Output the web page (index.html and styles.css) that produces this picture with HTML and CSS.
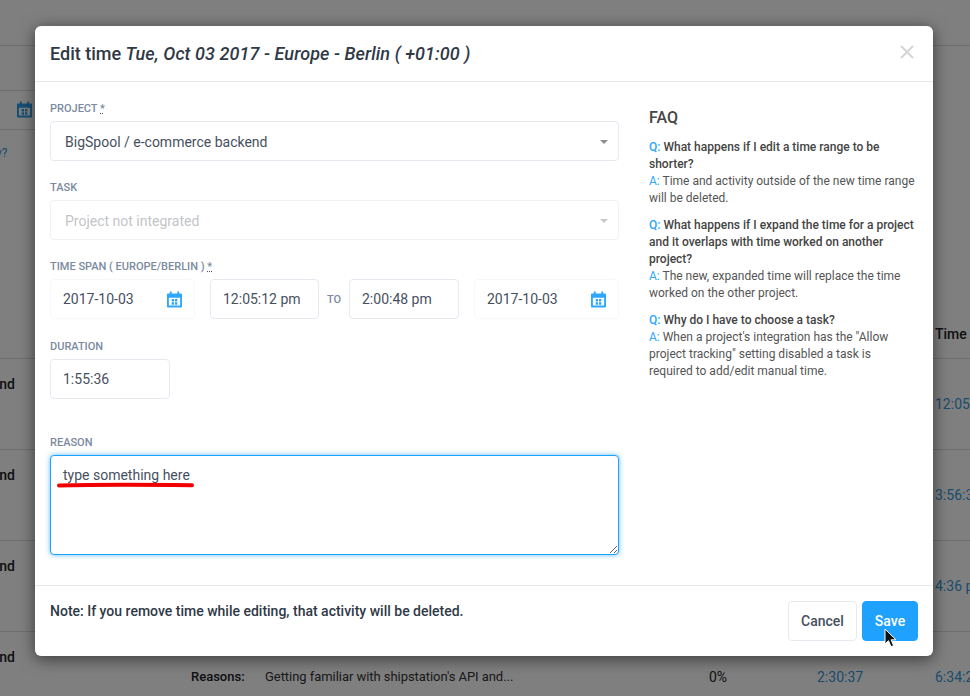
FILE: index.html
```html
<!DOCTYPE html>
<html lang="en">
<head>
<meta charset="utf-8">
<title>Edit time</title>
<link rel="stylesheet" href="styles.css">
</head>
<body>
<svg class="sprite" width="0" height="0" aria-hidden="true">
  <symbol id="cal" viewBox="0 0 16 17">
    <path fill="currentColor" fill-rule="evenodd" d="M3 0h2v2h6V0h2v2h2a1 1 0 0 1 1 1v13a1 1 0 0 1-1 1H1a1 1 0 0 1-1-1V3a1 1 0 0 1 1-1h2V0zM2 6.500v8.500h12V6.500H2zM5 8h2.500v2.500H5V8zm3.500 0H11v2.500H8.500V8zM5 11.500h2.500V14H5v-2.500zm3.500 0H11V14H8.500v-2.500z"/>
  </symbol>
</svg>

<div class="page">
  <div class="top-bar"></div>
  <div class="sub-bar"></div>
  <div class="date-bar"><svg class="bg-cal"><use href="#cal"/></svg></div>
  <div class="hint-row"><a class="bg-link">y?</a><span class="head-time">Time</span></div>
  <div class="t-row"><span class="col-name">BigSpool / e-commerce backend</span><span class="col-time link">12:05:12 pm</span></div>
  <div class="t-row"><span class="col-name">BigSpool / e-commerce backend</span><span class="col-time link">3:56:30 pm</span></div>
  <div class="t-row"><span class="col-name">BigSpool / e-commerce backend</span><span class="col-time link">4:36 pm</span></div>
  <div class="t-row last-row">
    <span class="col-name">BigSpool / e-commerce backend</span>
    <div class="reasons"><b>Reasons:</b><span class="reason-text">Getting familiar with shipstation's API and...</span></div>
    <span class="pct">0%</span>
    <span class="dur link">2:30:37</span>
    <span class="col-time link">6:34:20 pm</span>
  </div>
</div>

<div class="backdrop"></div>

<div class="modal">
  <header class="modal-head">
    <h1 class="modal-title">Edit time <em>Tue, Oct 03 2017 - Europe - Berlin ( +01:00 )</em></h1>
    <svg class="close" width="14" height="14" viewBox="0 0 14 14"><path d="M1 1l12 12M13 1L1 13" stroke="#d3d3d3" stroke-width="1.800" fill="none"/></svg>
  </header>

  <div class="modal-body">
    <form class="form">
      <div class="group">
        <label class="label">Project <span class="req">*</span></label>
        <div class="field select"><span>BigSpool / e-commerce backend</span><i class="caret"></i></div>
      </div>
      <div class="group">
        <label class="label">Task</label>
        <div class="field select disabled"><span>Project not integrated</span><i class="caret"></i></div>
      </div>
      <div class="group group-time">
        <label class="label">Time span ( Europe/Berlin ) <span class="req">*</span></label>
        <div class="time-row">
          <div class="field date"><span>2017-10-03</span><svg class="cal-icon"><use href="#cal"/></svg></div>
          <div class="field time first-time">12:05:12 pm</div>
          <span class="to">To</span>
          <div class="field time second-time">2:00:48 pm</div>
          <div class="field date end-date"><span>2017-10-03</span><svg class="cal-icon"><use href="#cal"/></svg></div>
        </div>
      </div>
      <div class="group group-duration">
        <label class="label">Duration</label>
        <div class="field duration">1:55:36</div>
      </div>
      <div class="group group-reason">
        <label class="label">Reason</label>
        <div class="reason-wrap">
          <textarea class="reason">type something here</textarea>
          <svg class="scribble" width="140" height="8" viewBox="0 0 140 8"><path d="M3 4.500C40 3.500 100 3.800 136 4.200" stroke="#f00000" stroke-width="4" stroke-linecap="round" fill="none"/></svg>
        </div>
      </div>
    </form>

    <aside class="faq">
      <h2 class="faq-title">FAQ</h2>
      <p class="faq-item"><b><span class="qa">Q:</span> What happens if I edit a time range to be shorter?</b><br><span class="qa">A:</span> Time and activity outside of the new time range will be deleted.</p>
      <p class="faq-item"><b><span class="qa">Q:</span> What happens if I expand the time for a project and it overlaps with time worked on another project?</b><br><span class="qa">A:</span> The new, expanded time will replace the time worked on the other project.</p>
      <p class="faq-item"><b><span class="qa">Q:</span> Why do I have to choose a task?</b><br><span class="qa">A:</span> When a project's integration has the "Allow project tracking" setting disabled a task is required to add/edit manual time.</p>
    </aside>
  </div>

  <footer class="modal-foot">
    <p class="note">Note: If you remove time while editing, that activity will be deleted.</p>
    <div class="actions">
      <button class="btn btn-cancel" type="button">Cancel</button>
      <button class="btn btn-save" type="button">Save</button>
    </div>
  </footer>
</div>

<svg class="cursor" width="13" height="20" viewBox="0 0 13 20"><path d="M1 1v15l3.500-3.300 2.500 6 2.600-1.100-2.500-5.800h4.900z" fill="#111" stroke="#fff" stroke-width="1"/></svg>
</body>
</html>
```

FILE: styles.css
```css
* { box-sizing: border-box; }
html, body { margin: 0; height: 696px; overflow: hidden; }
body { font-family: Roboto, "Liberation Sans", sans-serif; font-size: 14px; color: #47505e; background: #fff; }
.sprite { position: absolute; }

/* Page behind the dialog */
.page { display: flex; flex-direction: column; height: 696px; overflow: hidden; color: #222; }
.page > div { flex: none; }
.top-bar { height: 46px; border-bottom: 1px solid #ddd; }
.sub-bar { height: 45px; width: 300px; border-bottom: 1px solid #ddd; }
.date-bar { height: 39px; width: 300px; border-bottom: 1px solid #ddd; padding: 10px 0 0 17px; }
.bg-cal { display: block; width: 15px; height: 17px; color: #2b9fe8; }
.hint-row { height: 229px; padding-top: 16px; display: flex; justify-content: space-between; border-bottom: 1px solid #ddd; }
.bg-link { color: #3498db; font-size: 12px; line-height: 14px; margin-left: -4px; }
.head-time { width: 35px; align-self: flex-end; padding-bottom: 16px; font-weight: 500; overflow: hidden; line-height: 16px; }
.t-row { height: 91px; display: flex; align-items: flex-start; border-bottom: 1px solid #ddd; }
.col-name { width: 15px; padding-top: 17px; font-weight: 500; white-space: nowrap; overflow: hidden; display: flex; justify-content: flex-end; flex: none; line-height: 16px; }
.col-time { margin-left: auto; width: 35px; padding-top: 37px; white-space: nowrap; overflow: hidden; flex: none; line-height: 16px; }
.link { color: #3498db; }
.last-row { border-bottom: 0; }
.reasons { display: flex; margin-left: 176px; padding-top: 37px; width: 518px; line-height: 16px; white-space: nowrap; flex: none; }
.reasons b { width: 74px; font-weight: 500; font-size: 13px; }
.reason-text { color: #333; font-size: 13px; letter-spacing: -.05px; }
.pct { padding-top: 37px; width: 108px; flex: none; line-height: 16px; }
.dur { padding-top: 37px; line-height: 16px; }

.backdrop { position: absolute; inset: 0; background: rgba(0, 0, 0, .5); }

/* Dialog */
.modal { position: absolute; left: 35px; top: 26px; width: 898px; height: 630px; display: flex; flex-direction: column; background: #fff; border-radius: 6px; box-shadow: 0 3px 16px rgba(0, 0, 0, .55); }
.modal-head { height: 56px; flex: none; display: flex; align-items: center; justify-content: space-between; padding: 0 19px 1px 15px; border-bottom: 1px solid #e7e9ec; }
.modal-title { margin: 0; font-size: 18px; font-weight: 500; color: #2f3946; }
.modal-title em { font-style: italic; letter-spacing: .08px; }
.close { display: block; margin-bottom: 3px; }

.modal-body { flex: 1; display: flex; gap: 30px; padding: 20px 15px 0; }
.form { width: 569px; flex: none; }
.group { margin-bottom: 20px; }
.group-time { margin-bottom: 21px; }
.group-duration { margin-bottom: 37px; }
.group-reason { margin-bottom: 0; }
.label { display: block; height: 13px; margin-bottom: 6px; font-size: 11px; font-weight: 500; line-height: 13px; text-transform: uppercase; color: #7b8aa0; }
.req { text-decoration: underline dotted #555; }
.field { height: 40px; display: flex; align-items: center; background: #fff; border: 1px solid #e6eaf0; border-radius: 4px; padding: 0 12px; font-size: 14px; color: #47505e; }
.select { padding: 1px 10px 0 14px; justify-content: space-between; }
.select.disabled { color: #c3c5c9; border-color: #eff1f5; }
.caret { width: 0; height: 0; border-left: 4.500px solid transparent; border-right: 4.500px solid transparent; border-top: 4.500px solid #8d8d8d; }
.select.disabled .caret { border-top-color: #c8c8c8; }
.time-row { display: flex; align-items: center; }
.date { width: 145px; justify-content: space-between; border-color: #f7f8fa; }
.cal-icon { display: block; width: 15px; height: 17px; color: #2ea7ff; }
.first-time { margin-left: 15px; }
.time { width: 109px; }
.second-time { width: 110px; }
.to { width: 30px; text-align: center; font-size: 11px; font-weight: 500; line-height: 13px; text-transform: uppercase; color: #7b8aa0; }
.end-date { margin-left: 15px; }
.duration { width: 120px; }
.reason-wrap { position: relative; }
.reason { display: block; width: 569px; height: 100px; padding: 10px 12px; border: 1px solid #1ea1ff; border-radius: 4px; outline: 0; box-shadow: 0 0 5px rgba(30, 161, 255, .7); font: 14px/18px Roboto, "Liberation Sans", sans-serif; color: #47505e; background: #fff; }
.scribble { position: absolute; left: 6px; top: 26px; display: block; }

.faq { width: 267px; flex: none; font-size: 12px; line-height: 17px; color: #555; }
.faq-title { margin: 6px 0 11px; font-size: 16px; line-height: 20px; font-weight: 500; color: #454545; }
.faq-item { margin: 0 0 10px; }
.faq-item b { font-weight: 500; color: #444; }
.qa { color: #2ea7ff; }

.modal-foot { height: 71px; flex: none; display: flex; align-items: flex-start; justify-content: space-between; padding: 15px; border-top: 1px solid #e7e9ec; }
.note { margin: 1px 0 0; font-weight: 500; font-size: 14px; line-height: 18px; color: #2f3946; }
.actions { display: flex; gap: 5px; }
.btn { height: 40px; border-radius: 4px; font: 500 14px Roboto, "Liberation Sans", sans-serif; padding: 0; cursor: pointer; }
.btn-cancel { width: 69px; background: #fff; border: 1px solid #e6eaf0; color: #47505e; }
.btn-save { width: 56px; background: #1ea1ff; border: 1px solid #1ea1ff; color: #fff; }
.cursor { position: absolute; left: 884px; top: 628px; }
```
